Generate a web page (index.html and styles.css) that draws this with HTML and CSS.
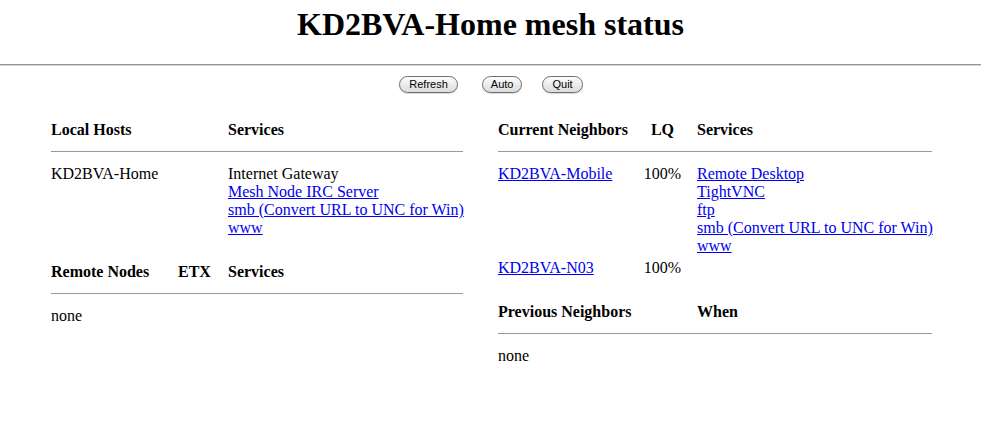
FILE: index.html
```html
<!DOCTYPE html>
<html>
<head>
<meta charset="utf-8">
<title>KD2BVA-Home mesh status</title>
<link rel="stylesheet" href="styles.css">
</head>
<body>
<h1 class="title">KD2BVA-Home mesh status</h1>
<hr class="top-rule">
<div class="buttons">
  <button class="btn btn-refresh">Refresh</button>
  <button class="btn btn-auto">Auto</button>
  <button class="btn btn-quit">Quit</button>
</div>
<div class="main">
  <div class="col col-left">
    <div class="section">
      <div class="grid g-local head">
        <div>Local Hosts</div><div>Services</div>
      </div>
      <div class="rule"></div>
      <div class="grid g-local row">
        <div>KD2BVA-Home</div>
        <div>Internet Gateway<br><a href="#">Mesh Node IRC Server</a><br><a href="#">smb (Convert URL to UNC for Win)</a><br><a href="#">www</a></div>
      </div>
    </div>
    <div class="section">
      <div class="grid g-remote head">
        <div>Remote Nodes</div><div>ETX</div><div>Services</div>
      </div>
      <div class="rule"></div>
      <div class="row">none</div>
    </div>
  </div>
  <div class="col col-right">
    <div class="section">
      <div class="grid g-neigh head">
        <div>Current Neighbors</div><div class="lq">LQ</div><div>Services</div>
      </div>
      <div class="rule"></div>
      <div class="grid g-neigh row">
        <div><a href="#">KD2BVA-Mobile</a></div>
        <div class="lq">100%</div>
        <div><a href="#">Remote Desktop</a><br><a href="#">TightVNC</a><br><a href="#">ftp</a><br><a href="#">smb (Convert URL to UNC for Win)</a><br><a href="#">www</a></div>
      </div>
      <div class="grid g-neigh row">
        <div><a href="#">KD2BVA-N03</a></div>
        <div class="lq">100%</div>
        <div></div>
      </div>
    </div>
    <div class="section">
      <div class="grid g-prev head">
        <div>Previous Neighbors</div><div>When</div>
      </div>
      <div class="rule"></div>
      <div class="row">none</div>
    </div>
  </div>
</div>
</body>
</html>
```
FILE: styles.css
```css
html, body {
  margin: 0;
  padding: 0;
  background: #ffffff;
}
body {
  font-family: "Liberation Serif", "Times New Roman", serif;
  font-size: 16px;
  line-height: 18px;
  color: #000;
}
.title {
  margin: 0;
  padding-top: 6px;
  font-size: 32px;
  line-height: 37px;
  font-weight: bold;
  text-align: center;
}
.top-rule {
  margin: 21px 0 0 0;
  height: 0;
  border: 0;
  border-top: 1px solid #959595;
  border-bottom: 1px solid #d6d6d6;
}
.buttons {
  display: flex;
  justify-content: center;
  margin-top: 10px;
  padding-left: 1px;
}
.btn {
  font-family: "Liberation Sans", "DejaVu Sans", sans-serif;
  font-size: 11px;
  line-height: 13px;
  height: 17px;
  padding: 0 9px;
  border: 1px solid #6e6e6e;
  border-radius: 9px;
  background: linear-gradient(#fdfdfd 0%, #ececec 50%, #dcdcdc 100%);
  color: #000;
  box-shadow: 0 1px 1px rgba(0,0,0,0.15);
}
.btn-refresh { margin-right: 24px; }
.btn-auto { margin-right: 20px; padding: 0 8px; }
.main {
  display: flex;
  padding-left: 51px;
  gap: 35px;
  margin-top: 28px;
}
.col-left { width: 412px; }
.col-right { width: 434px; }
.section + .section { margin-top: 26px; }
.grid { display: grid; }
.head { font-weight: bold; }
.g-local { grid-template-columns: 177px 1fr; }
.g-remote { grid-template-columns: 127px 50px 1fr; }
.g-neigh { grid-template-columns: 130px 69px 1fr; }
.g-prev { grid-template-columns: 199px 1fr; }
.grid > div { white-space: nowrap; }
.lq { text-align: center; }
.row + .row { margin-top: 4px; }
.rule {
  border-top: 1px solid #9a9a9a;
  margin: 12px 0 13px 0;
}
a { color: #0000ee; text-decoration: underline; }
```
